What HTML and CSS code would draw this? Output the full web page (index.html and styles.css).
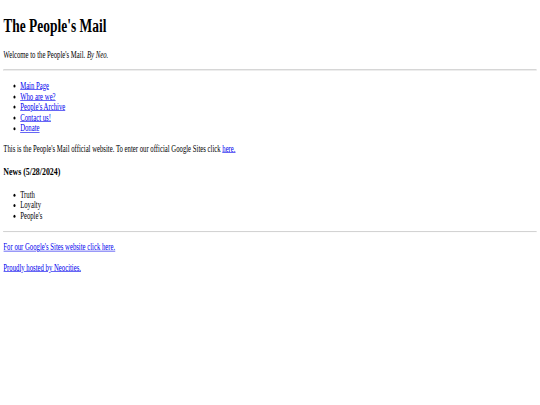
FILE: index.html
```html
<!DOCTYPE html>
<html class="viewport">
<head>
<meta charset="utf-8">
<title>The People's Mail</title>
<link rel="stylesheet" href="styles.css">
</head>
<body class="page">
<h1 class="title">The People's Mail</h1>
<p>Welcome to the People's Mail. <i>By Neo.</i></p>
<hr>
<ul>
<li><a href="#">Main Page</a></li>
<li><a href="#">Who are we?</a></li>
<li><a href="#">People's Archive</a></li>
<li><a href="#">Contact us!</a></li>
<li><a href="#">Donate</a></li>
</ul>
<p>This is the People's Mail official website. To enter our official Google Sites click <a href="#">here.</a></p>
<h3>News (5/28/2024)</h3>
<ul>
<li>Truth</li>
<li>Loyalty</li>
<li>People's</li>
</ul>
<hr>
<p><a href="#">For our Google's Sites website click here.</a></p>
<p><a href="#">Proudly hosted by Neocities.</a></p>
</body>
</html>
```
FILE: styles.css
```css
.viewport {
  width: 1286px;
  height: 675px;
  overflow: hidden;
  transform: scale(0.42, 0.6);
  transform-origin: 0 0;
  background: #fff;
}
.page {
  font-family: "Liberation Serif", "Times New Roman", serif;
  line-height: 1.12;
  color: #000;
}
.page a {
  color: #0000ee;
}
.title {
  margin-top: 16.5px;
}
```
